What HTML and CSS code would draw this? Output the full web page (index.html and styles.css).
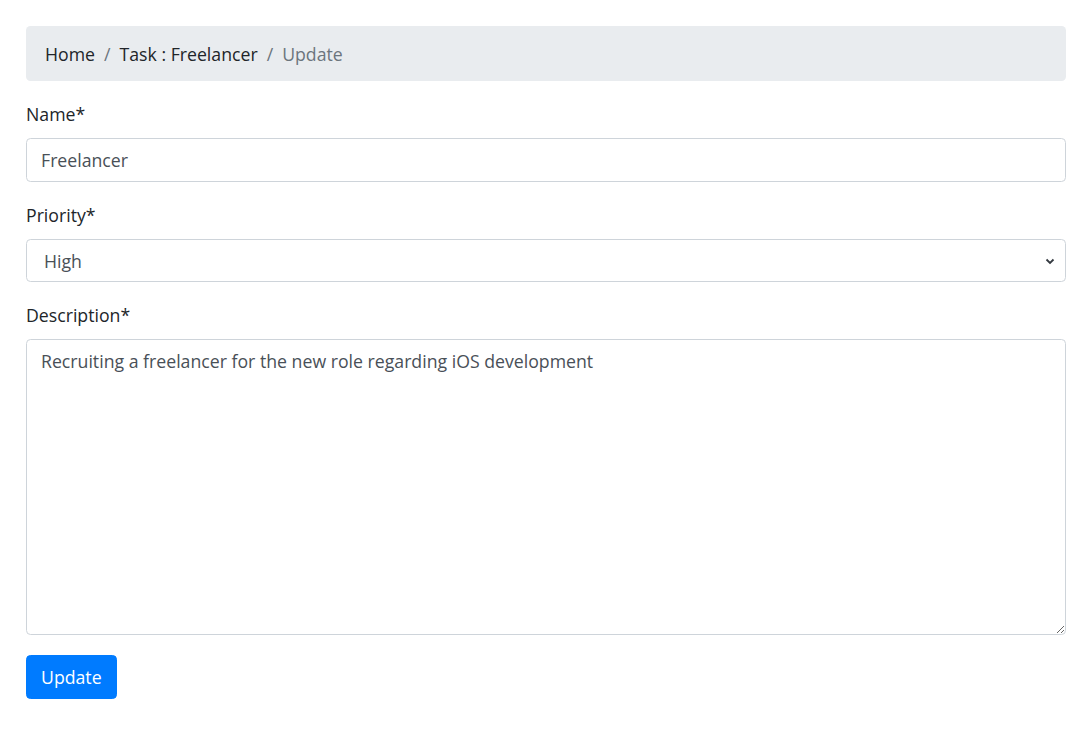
FILE: index.html
```html
<!DOCTYPE html>
<html lang="en">
<head>
<meta charset="utf-8">
<title>Update Task</title>
<link rel="stylesheet" href="styles.css">
</head>
<body>
<nav class="breadcrumb">
  <a class="crumb" href="#">Home</a>
  <span class="sep">/</span>
  <a class="crumb" href="#">Task : Freelancer</a>
  <span class="sep">/</span>
  <span class="crumb active">Update</span>
</nav>
<form class="form">
  <div class="form-group">
    <label class="label" for="name">Name*</label>
    <input class="control" id="name" type="text" value="Freelancer">
  </div>
  <div class="form-group">
    <label class="label" for="priority">Priority*</label>
    <div class="select-wrap">
      <select class="control select" id="priority">
        <option>Low</option>
        <option>Medium</option>
        <option selected>High</option>
      </select>
      <svg class="chevron" width="10" height="8" viewBox="0 0 10 8"><path d="M1.5 2.5 L5 6 L8.5 2.5" fill="none" stroke="#343a40" stroke-width="1.8"/></svg>
    </div>
  </div>
  <div class="form-group form-group-last">
    <label class="label" for="desc">Description*</label>
    <textarea class="control textarea" id="desc">Recruiting a freelancer for the new role regarding iOS development</textarea>
  </div>
  <button class="btn" type="button">Update</button>
</form>
</body>
</html>
```

FILE: styles.css
```css
* { box-sizing: border-box; }
html, body { margin: 0; padding: 0; }
body {
  padding: 26px 14px 26px 26px;
  font-family: "Open Sans", "Noto Sans", sans-serif;
  font-size: 17.7px;
  line-height: 28px;
  color: #212529;
  background: #fff;
}
.breadcrumb {
  display: flex;
  align-items: center;
  height: 55px;
  padding: 0 19px;
  margin-bottom: 19px;
  background: #e9ecef;
  border-radius: 4.5px;
}
.crumb { color: #212529; text-decoration: none; }
.crumb.active { color: #6c757d; }
.sep { color: #6c757d; padding: 0 9px; }
.form-group { margin-bottom: 19px; }
.form-group-last { margin-bottom: 20px; }
.label { display: block; margin-bottom: 10px; line-height: 28px; }
.control {
  display: block;
  width: 100%;
  height: 44px;
  padding: 7px 14px;
  font-family: inherit;
  font-size: 17.7px;
  line-height: 28px;
  color: #495057;
  background: #fff;
  border: 1px solid #ced4da;
  border-radius: 4.5px;
  outline: none;
}
.select-wrap { position: relative; }
.select {
  appearance: none;
  -webkit-appearance: none;
  height: 43px;
  padding: 6px 14px 6px 17px;
}
.chevron { position: absolute; right: 11px; top: 18px; }
.textarea { height: 296px; resize: vertical; }
.btn {
  display: inline-block;
  height: 44px;
  padding: 7px 14px;
  font-family: inherit;
  font-size: 17.7px;
  line-height: 28px;
  color: #fff;
  background: #007bff;
  border: 1px solid #007bff;
  border-radius: 4.5px;
}
```
